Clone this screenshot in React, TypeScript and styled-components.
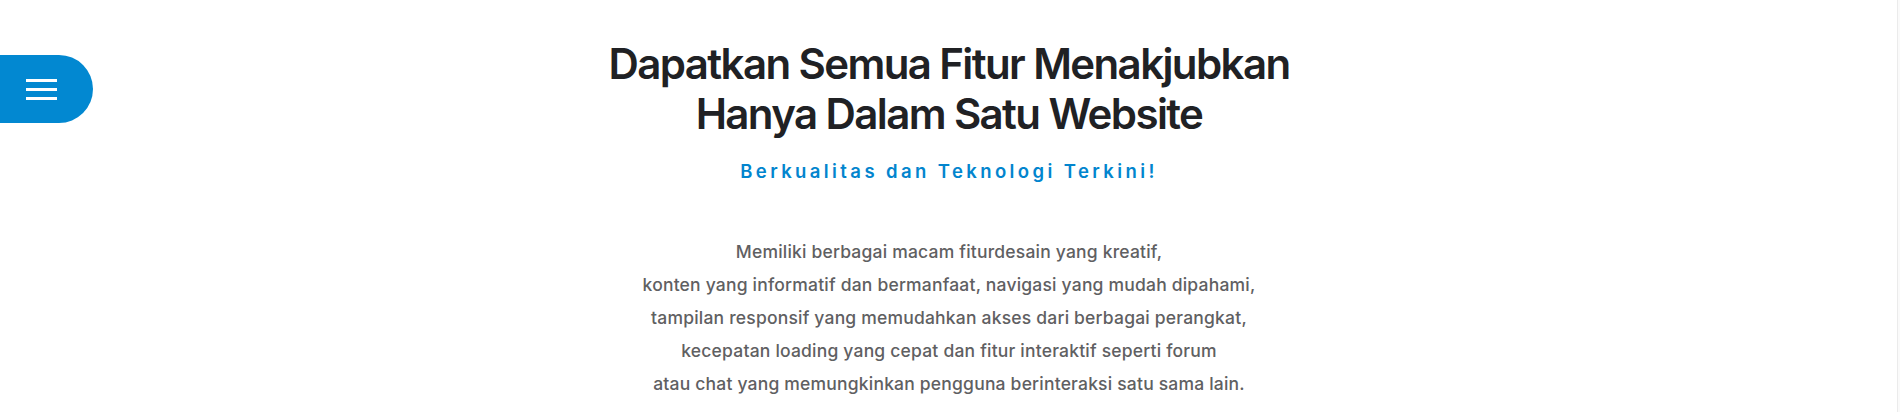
import React from "react";
import styled, { createGlobalStyle } from "styled-components";

const Global = createGlobalStyle`
  html, body { margin: 0; padding: 0; background: #ffffff; }
  body { font-family: Inter, "Open Sans", sans-serif; }
  * { box-sizing: border-box; }
`;

const Page = styled.div`
  min-height: 412px;
  width: 100%;
  border-right: 2px solid #fafafa;
  box-shadow: inset -1px 0 0 #ebebeb;
  display: flex;
  justify-content: center;
`;

const MenuToggle = styled.button`
  position: fixed;
  left: 0;
  top: 55px;
  width: 93px;
  height: 68px;
  border: none;
  padding: 0 10px 0 0;
  background: #0288d1;
  border-radius: 0 34px 34px 0;
  display: flex;
  flex-direction: column;
  justify-content: center;
  align-items: center;
  gap: 6px;
  cursor: pointer;
`;

const Bar = styled.span`
  display: block;
  width: 31px;
  height: 3px;
  background: #ffffff;
`;

const Content = styled.section`
  display: flex;
  flex-direction: column;
  align-items: center;
  text-align: center;
  padding-top: 39px;
`;

const Title = styled.h1`
  margin: 0;
  font-family: Inter, "Open Sans", sans-serif;
  font-weight: 600;
  font-size: 42px;
  line-height: 50px;
  letter-spacing: -1.6px;
  color: #202124;
`;

const Subtitle = styled.h2`
  margin: 18px 0 0;
  font-family: Inter, "Open Sans", sans-serif;
  font-weight: 600;
  font-size: 18.5px;
  line-height: 28px;
  letter-spacing: 3.4px;
  color: #0285ce;
`;

const Body = styled.p`
  margin: 50px 0 0;
  font-family: Inter, "Open Sans", sans-serif;
  font-weight: 500;
  font-size: 17.5px;
  line-height: 33px;
  letter-spacing: 0.2px;
  color: #5f6062;
`;

const lines = [
  "Memiliki berbagai macam fiturdesain yang kreatif,",
  "konten yang informatif dan bermanfaat, navigasi yang mudah dipahami,",
  "tampilan responsif yang memudahkan akses dari berbagai perangkat,",
  "kecepatan loading yang cepat dan fitur interaktif seperti forum",
  "atau chat yang memungkinkan pengguna berinteraksi satu sama lain.",
];

export default function App() {
  return (
    <>
      <Global />
      <Page>
        <MenuToggle aria-label="Menu">
          <Bar />
          <Bar />
          <Bar />
        </MenuToggle>
        <Content>
          <Title>
            Dapatkan Semua Fitur Menakjubkan
            <br />
            Hanya Dalam Satu Website
          </Title>
          <Subtitle>Berkualitas dan Teknologi Terkini!</Subtitle>
          <Body>
            {lines.map((l, i) => (
              <React.Fragment key={i}>
                {l}
                {i < lines.length - 1 && <br />}
              </React.Fragment>
            ))}
          </Body>
        </Content>
      </Page>
    </>
  );
}
